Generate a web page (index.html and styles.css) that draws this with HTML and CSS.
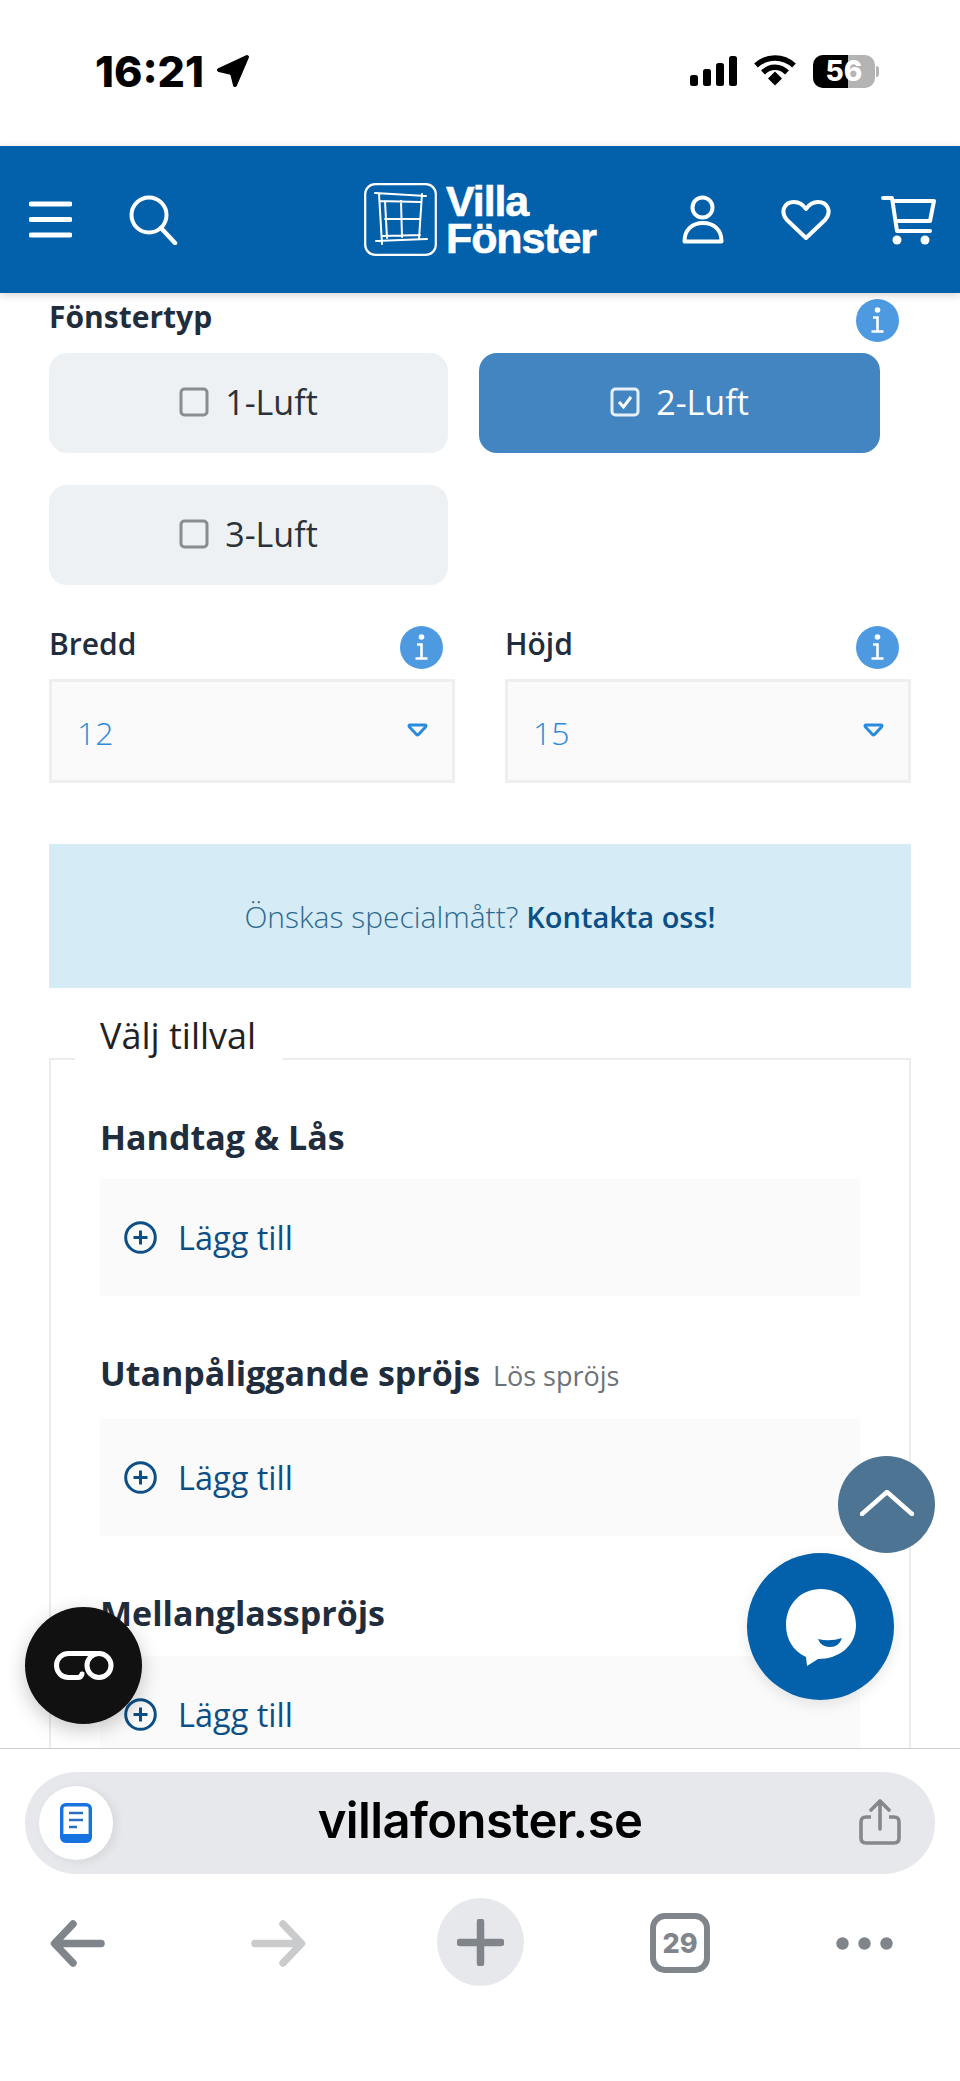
FILE: index.html
```html
<!DOCTYPE html>
<html lang="sv">
<head>
<meta charset="utf-8">
<title>Villa Fönster</title>
<link rel="stylesheet" href="styles.css">
</head>
<body>
<div class="page">
  <div class="status">
    <div class="status-left">
      <span class="time">16:21</span>
      <svg class="loc" viewBox="0 0 34 34"><path d="M31 3 L3 16 L16 19 L19 31 Z" fill="#000" stroke="#000" stroke-width="4" stroke-linejoin="round"/></svg>
    </div>
    <div class="status-right">
      <svg class="signal" viewBox="0 0 47 30"><rect x="0" y="19" width="8" height="11" rx="2.5"/><rect x="13" y="13" width="8" height="17" rx="2.5"/><rect x="26" y="7" width="8" height="23" rx="2.5"/><rect x="39" y="0" width="8" height="30" rx="2.5"/></svg>
      <svg class="wifi" viewBox="0 1 42 31"><path d="M2 11 C13 1 29 1 40 11" fill="none" stroke="#000" stroke-width="5.5"/><path d="M9 18 C16 11 26 11 33 18" fill="none" stroke="#000" stroke-width="5.5"/><path d="M14 24 L21 17 L28 24 L21 31 Z" fill="#000"/></svg>
      <div class="battery"><span class="battery-fill"></span><span class="battery-num">56</span><span class="battery-nub"></span></div>
    </div>
  </div>

  <header class="header">
    <div class="header-left">
      <svg class="ic-menu" viewBox="0 0 43 37"><path d="M2 3 H41 M2 18.5 H41 M2 34 H41" stroke="#fff" stroke-width="5" stroke-linecap="round"/></svg>
      <svg class="ic-search" viewBox="0 0 49 50"><circle cx="20" cy="20" r="17.500" fill="none" stroke="#fff" stroke-width="4"/><path d="M32 33 L46 48" stroke="#fff" stroke-width="4.500" stroke-linecap="round"/></svg>
    </div>
    <div class="logo">
      <svg class="logo-mark" viewBox="0 0 73 73"><rect x="1.200" y="1.200" width="70.600" height="70.600" rx="10" fill="none" stroke="#fff" stroke-width="2.200"/><path d="M11 10 L62 13 M12 58 L63 56 M15 11 L18 61 M21 18 L23 55 M58 11 L55 56 M16 18 L56 19 M21 36 L56 36 M19 53 L56 52 M37 18 L38 54" fill="none" stroke="#fff" stroke-width="2" stroke-linecap="round"/></svg>
      <div class="logo-text"><span>Villa</span><span>Fönster</span></div>
    </div>
    <div class="header-right">
      <svg class="ic-user" viewBox="0 0 42 50"><circle cx="20.500" cy="12.500" r="10" fill="none" stroke="#fff" stroke-width="4"/><path d="M2.500 46.500 C2.500 35 10 28 21 28 C32 28 39.500 35 39.500 46.500 Z" fill="none" stroke="#fff" stroke-width="4" stroke-linejoin="round"/></svg>
      <svg class="ic-heart" viewBox="0 0 50 42"><path d="M25 39 L6 21 C-1 13 3 3 13 3 C19 3 23 7 25 10 C27 7 31 3 37 3 C47 3 51 13 44 21 Z" fill="none" stroke="#fff" stroke-width="4" stroke-linejoin="round"/></svg>
      <svg class="ic-cart" viewBox="0 0 55 50"><path d="M2 3 H11 L16 36 H49 M12 6 H53 L49 26 H15" fill="none" stroke="#fff" stroke-width="4" stroke-linecap="round" stroke-linejoin="round"/><circle cx="16" cy="45" r="4.500" fill="#fff"/><circle cx="44" cy="45" r="4.500" fill="#fff"/></svg>
    </div>
  </header>

  <main class="main">
    <div class="type-head">
      <span class="label label-strong">Fönstertyp</span>
      <svg class="info" viewBox="0 0 43 43"><circle cx="21.500" cy="21.500" r="21.500" fill="#4d9ae0"/><circle cx="21.500" cy="11" r="2.800" fill="#fff"/><path d="M17 18.500 H21.500 V32.500 M15.500 32.500 H27.500" fill="none" stroke="#fff" stroke-width="2.600"/></svg>
    </div>
    <div class="options">
      <div class="option">
        <svg class="check" viewBox="0 0 30 30"><rect x="2" y="2" width="26" height="26" rx="3.500" fill="none" stroke="#8a8d90" stroke-width="3"/></svg>
        <span>1-Luft</span>
      </div>
      <div class="option option-on">
        <svg class="check" viewBox="0 0 30 30"><rect x="2" y="2" width="26" height="26" rx="3.500" fill="none" stroke="#e6f0f8" stroke-width="3"/><path d="M9 15 L13.500 20 L21 10" fill="none" stroke="#fff" stroke-width="3"/></svg>
        <span>2-Luft</span>
      </div>
      <div class="option">
        <svg class="check" viewBox="0 0 30 30"><rect x="2" y="2" width="26" height="26" rx="3.500" fill="none" stroke="#8a8d90" stroke-width="3"/></svg>
        <span>3-Luft</span>
      </div>
    </div>

    <div class="sizes">
      <div class="size">
        <div class="size-head"><span class="label">Bredd</span><svg class="info" viewBox="0 0 43 43"><circle cx="21.500" cy="21.500" r="21.500" fill="#4d9ae0"/><circle cx="21.500" cy="11" r="2.800" fill="#fff"/><path d="M17 18.500 H21.500 V32.500 M15.500 32.500 H27.500" fill="none" stroke="#fff" stroke-width="2.600"/></svg></div>
        <div class="select"><span>12</span><svg class="caret" viewBox="0 0 21 14"><path d="M2.500 2 H18.500 Q19.500 2.500 18.500 4 L11.500 11.500 Q10.500 12.500 9.500 11.500 L2.500 4 Q1.500 2.500 2.500 2 Z" fill="none" stroke="#2a8bdc" stroke-width="3" stroke-linejoin="round"/></svg></div>
      </div>
      <div class="size">
        <div class="size-head"><span class="label">Höjd</span><svg class="info" viewBox="0 0 43 43"><circle cx="21.500" cy="21.500" r="21.500" fill="#4d9ae0"/><circle cx="21.500" cy="11" r="2.800" fill="#fff"/><path d="M17 18.500 H21.500 V32.500 M15.500 32.500 H27.500" fill="none" stroke="#fff" stroke-width="2.600"/></svg></div>
        <div class="select"><span>15</span><svg class="caret" viewBox="0 0 21 14"><path d="M2.500 2 H18.500 Q19.500 2.500 18.500 4 L11.500 11.500 Q10.500 12.500 9.500 11.500 L2.500 4 Q1.500 2.500 2.500 2 Z" fill="none" stroke="#2a8bdc" stroke-width="3" stroke-linejoin="round"/></svg></div>
      </div>
    </div>

    <div class="notice"><span>Önskas specialmått?</span><strong>Kontakta oss!</strong></div>

    <section class="extras">
      <h2 class="legend">Välj tillval</h2>
      <h3 class="extra-title">Handtag &amp; Lås</h3>
      <div class="extra-row">
        <svg class="plus" viewBox="0 0 33 33"><circle cx="16.500" cy="16.500" r="14.800" fill="none" stroke="#0b4f86" stroke-width="3"/><path d="M16.500 9.500 V23.500 M9.500 16.500 H23.500" stroke="#0b4f86" stroke-width="3"/></svg>
        <span>Lägg till</span>
      </div>
      <h3 class="extra-title extra-title-next">Utanpåliggande spröjs <small>Lös spröjs</small></h3>
      <div class="extra-row">
        <svg class="plus" viewBox="0 0 33 33"><circle cx="16.500" cy="16.500" r="14.800" fill="none" stroke="#0b4f86" stroke-width="3"/><path d="M16.500 9.500 V23.500 M9.500 16.500 H23.500" stroke="#0b4f86" stroke-width="3"/></svg>
        <span>Lägg till</span>
      </div>
      <h3 class="extra-title extra-title-next">Mellanglasspröjs</h3>
      <div class="extra-row">
        <svg class="plus" viewBox="0 0 33 33"><circle cx="16.500" cy="16.500" r="14.800" fill="none" stroke="#0b4f86" stroke-width="3"/><path d="M16.500 9.500 V23.500 M9.500 16.500 H23.500" stroke="#0b4f86" stroke-width="3"/></svg>
        <span>Lägg till</span>
      </div>
    </section>
  </main>

  <footer class="toolbar">
    <div class="urlbar">
      <div class="reader">
        <svg class="reader-ic" viewBox="0 0 32 40"><rect x="1.700" y="1.700" width="28.600" height="36.600" rx="4" fill="#fff" stroke="#1673e0" stroke-width="3.400"/><rect x="1.700" y="31" width="28.600" height="7.300" fill="#1673e0"/><path d="M9 10 H23 M9 17 H23 M9 24 H17" stroke="#2a6fc4" stroke-width="2.600"/></svg>
      </div>
      <span class="url">villafonster.se</span>
      <svg class="share" viewBox="0 0 42 46"><path d="M12 18 H7 Q2 18 2 23 V39 Q2 44 7 44 H35 Q40 44 40 39 V23 Q40 18 35 18 H30" fill="none" stroke="#84888d" stroke-width="3.600"/><path d="M21 30 V3 M12 11 L21 2 L30 11" fill="none" stroke="#84888d" stroke-width="3.600" stroke-linecap="round" stroke-linejoin="round"/></svg>
    </div>
    <nav class="nav">
      <svg class="nav-arrow" viewBox="0 0 55 47"><path d="M51 23.500 H5 M23 4 L4.500 23.500 L23 43" fill="none" stroke="#7f858b" stroke-width="7.500" stroke-linecap="round" stroke-linejoin="round"/></svg>
      <svg class="nav-arrow nav-forward" viewBox="0 0 55 47"><path d="M4 23.500 H50 M32 4 L50.500 23.500 L32 43" fill="none" stroke="#c9cbcd" stroke-width="7.500" stroke-linecap="round" stroke-linejoin="round"/></svg>
      <div class="nav-plus"><svg class="nav-plus-ic" viewBox="0 0 47 47"><path d="M23.500 3 V44 M3 23.500 H44" stroke="#7f858b" stroke-width="7.500" stroke-linecap="round"/></svg></div>
      <div class="tabs">29</div>
      <svg class="dots" viewBox="0 0 57 13"><circle cx="6.500" cy="6.500" r="6.200" fill="#7f858b"/><circle cx="28.500" cy="6.500" r="6.200" fill="#7f858b"/><circle cx="50.500" cy="6.500" r="6.200" fill="#7f858b"/></svg>
    </nav>
  </footer>

  <button class="fab fab-top"><svg class="fab-top-ic" viewBox="0 0 54 26"><path d="M2 24 L27 2 L52 24" fill="none" stroke="#fff" stroke-width="4.500" stroke-linecap="round" stroke-linejoin="round"/></svg></button>
  <button class="fab fab-chat"><svg class="fab-chat-ic" viewBox="0 0 70 78"><path d="M35 0 C55 0 70 15 70 36 C70 57 53 70 32 70 L21 77 L20 68 C7 62 0 50 0 36 C0 15 15 0 35 0 Z" fill="#fff"/><path d="M32 50 Q44 53 56 49 Q53 58 44 58 Q35 58 32 50 Z" fill="#0360ab"/></svg></button>
  <button class="fab fab-link"><svg class="fab-link-ic" viewBox="0 0 60 29"><path d="M45 2.500 H14.500 C7.500 2.500 2.500 8 2.500 14.500 C2.500 21 7.500 26.500 14.500 26.500 H24 Q27 26.500 28 23" fill="none" stroke="#fff" stroke-width="5" stroke-linecap="round"/><circle cx="45" cy="14.500" r="12" fill="none" stroke="#fff" stroke-width="5"/></svg></button>
</div>
</body>
</html>
```
FILE: styles.css
```css
* { box-sizing: border-box; }
html, body { margin: 0; padding: 0; background: #fff; }
.page {
  position: relative;
  width: 960px;
  height: 2081px;
  overflow: hidden;
  display: flex;
  flex-direction: column;
  font-family: "Open Sans", sans-serif;
  color: #1f2d3d;
}

/* status bar */
.status {
  height: 146px;
  flex: none;
  display: flex;
  justify-content: space-between;
  align-items: center;
  padding: 0 85px 4px 95px;
}
.status-left { display: flex; align-items: center; gap: 12px; }
.time { font-family: Inter, sans-serif; font-weight: 800; font-size: 43px; line-height: 46px; color: #000; }
.loc { width: 34px; height: 34px; }
.status-right { display: flex; align-items: center; gap: 18px; }
.signal { width: 47px; height: 30px; fill: #000; margin-right: 0; }
.wifi { width: 42px; height: 32px; margin: 0 -1px; }
.battery {
  position: relative;
  width: 62px;
  height: 33px;
  border-radius: 10px;
  background: #b4b4b4;
}
.battery-fill { position: absolute; left: 0; top: 0; width: 35px; height: 33px; background: #000; border-radius: 10px 0 0 10px; }
.battery-num { position: absolute; left: 11px; top: 0; width: 40px; text-align: center; font-family: Inter, sans-serif; font-weight: 800; font-size: 28px; line-height: 33px; color: #fff; }
.battery-nub { position: absolute; left: 63px; top: 11px; width: 3px; height: 11px; border-radius: 0 3px 3px 0; background: #b4b4b4; }

/* header */
.header {
  position: relative;
  z-index: 2;
  height: 147px;
  flex: none;
  background: #0360ab;
  display: flex;
  align-items: center;
  box-shadow: 0 2px 8px rgba(0, 0, 0, 0.18);
  padding: 0 24px 0 29px;
}
.header-left { display: flex; align-items: center; gap: 57px; width: 335px; }
.ic-menu { width: 43px; height: 37px; }
.ic-search { width: 49px; height: 50px; }
.logo { display: flex; align-items: center; gap: 9px; width: 318px; }
.logo-mark { width: 73px; height: 73px; flex: none; }
.logo-text {
  display: flex;
  flex-direction: column;
  font-family: "Liberation Sans", Arial, sans-serif;
  font-weight: 700;
  font-size: 43px;
  line-height: 37px;
  color: #fff;
  letter-spacing: -1.1px;
  -webkit-text-stroke: 0.6px #fff;
  margin-top: 1px;
}
.header-right { display: flex; align-items: center; gap: 50px; }
.ic-user { width: 42px; height: 50px; }
.ic-heart { width: 50px; height: 42px; margin-left: 7px; }
.ic-cart { width: 55px; height: 50px; }

/* main */
.main {
  flex: 1;
  min-height: 0;
  overflow: hidden;
  padding: 6px 49px 0;
}
.type-head { display: flex; justify-content: space-between; height: 43px; margin-right: 12px; }
.label { font-weight: 600; font-size: 30px; line-height: 36px; color: #1f2d3d; }
.label-strong { font-weight: 700; }
.info { width: 43px; height: 43px; flex: none; }
.options {
  display: grid;
  grid-template-columns: 399px 401px;
  column-gap: 31px;
  row-gap: 32px;
  margin-top: 11px;
}
.option {
  height: 100px;
  border-radius: 18px;
  background: #edf1f4;
  display: flex;
  align-items: center;
  justify-content: center;
  gap: 16px;
  padding-bottom: 3px;
  font-size: 34px;
  color: #2b3138;
}
.option-on { background: #4285c1; color: #fff; }
.check { width: 30px; height: 30px; }

.sizes {
  display: grid;
  grid-template-columns: 406px 406px;
  column-gap: 50px;
  margin-top: 41px;
}
.size-head { display: flex; justify-content: space-between; height: 43px; margin-right: 12px; }
.select {
  height: 104px;
  margin-top: 10px;
  border: 3px solid #eeeeee;
  background: #fafafa;
  display: flex;
  justify-content: space-between;
  padding: 29px 24px 0 25px;
  font-size: 32px;
  font-weight: 300;
  line-height: 44px;
  color: #2a8bdc;
}
.caret { width: 21px; height: 14px; margin-top: 12px; }

.notice {
  height: 144px;
  margin-top: 61px;
  background: #d5ebf5;
  display: flex;
  align-items: center;
  justify-content: center;
  gap: 8px;
  font-size: 30px;
  font-weight: 300;
  color: #2d6a8f;
}
.notice strong { font-size: 29px; font-weight: 600; color: #0b4f86; }

.extras {
  position: relative;
  margin-top: 70px;
  border: 2px solid #ececec;
  border-bottom: 0;
  padding: 55px 49px 0;
}
.legend {
  position: absolute;
  left: 24px;
  top: -46px;
  margin: 0;
  padding: 0 25px;
  width: 208px;
  height: 52px;
  background: #fff;
  font-size: 36px;
  font-weight: 500;
  line-height: 44px;
  color: #222;
  white-space: nowrap;
}
.extra-title { margin: 0 0 20px; font-size: 34px; font-weight: 700; line-height: 44px; color: #1f2d3d; white-space: nowrap; }
.extra-title-next { margin-top: 55px; margin-bottom: 21px; }
.extra-title small { font-size: 27px; font-weight: 400; color: #6d7278; margin-left: 4px; }
.extra-row {
  height: 117px;
  background: #fafafa;
  display: flex;
  align-items: center;
  gap: 21px;
  padding-left: 24px;
  font-size: 32.5px;
  font-weight: 400;
  color: #0b4f86;
}
.plus { width: 33px; height: 33px; }

/* browser toolbar */
.toolbar {
  position: relative;
  z-index: 3;
  height: 333px;
  flex: none;
  background: #fff;
  border-top: 1px solid #cfcfcf;
  padding: 23px 25px 0;
}
.urlbar {
  height: 102px;
  border-radius: 51px;
  background: #e7e8ec;
  display: flex;
  align-items: center;
  justify-content: space-between;
  padding: 0 34px 0 14px;
}
.reader {
  width: 74px;
  height: 74px;
  border-radius: 50%;
  background: #fff;
  display: flex;
  align-items: center;
  justify-content: center;
  box-shadow: 4px 2px 10px rgba(0, 0, 0, 0.07);
}
.reader-ic { width: 32px; height: 40px; }
.url { font-family: Inter, sans-serif; font-weight: 600; font-size: 49px; line-height: 60px; color: #000; letter-spacing: -0.6px; margin: -5px 12px 0 0; }
.share { width: 42px; height: 46px; margin-top: -2px; }
.nav { display: flex; align-items: center; margin: 24px 0 0 25px; height: 88px; }
.nav-arrow { width: 55px; height: 47px; flex: none; margin-top: 2px; }
.nav-forward { margin-left: 146px; }
.nav-plus {
  width: 87px;
  height: 88px;
  margin-left: 131px;
  border-radius: 50%;
  background: #e7e8ec;
  display: flex;
  align-items: center;
  justify-content: center;
}
.nav-plus-ic { width: 47px; height: 47px; }
.tabs {
  width: 60px;
  height: 60px;
  margin: 2px 0 0 126px;
  border: 6.5px solid #7f858b;
  border-radius: 15px;
  display: flex;
  align-items: center;
  justify-content: center;
  font-family: Inter, sans-serif;
  font-weight: 800;
  font-size: 27px;
  color: #7f858b;
}
.dots { width: 57px; height: 13px; margin: 2px 0 0 126px; }

/* floating buttons */
.fab { position: absolute; z-index: 2; border: 0; padding: 0; border-radius: 50%; display: flex; align-items: center; justify-content: center; }
.fab-top { left: 838px; top: 1456px; width: 97px; height: 97px; background: #4d7493; }
.fab-top-ic { width: 54px; height: 26px; margin-top: -4px; }
.fab-chat { left: 747px; top: 1553px; width: 147px; height: 147px; background: #0360ab; box-shadow: 0 4px 14px rgba(0, 0, 0, 0.1); }
.fab-chat-ic { width: 70px; height: 78px; margin-top: 2px; }
.fab-link { left: 25px; top: 1607px; width: 117px; height: 117px; background: #111; box-shadow: 0 6px 20px rgba(0, 0, 0, 0.22); }
.fab-link-ic { width: 60px; height: 29px; margin-left: 1px; }
```
